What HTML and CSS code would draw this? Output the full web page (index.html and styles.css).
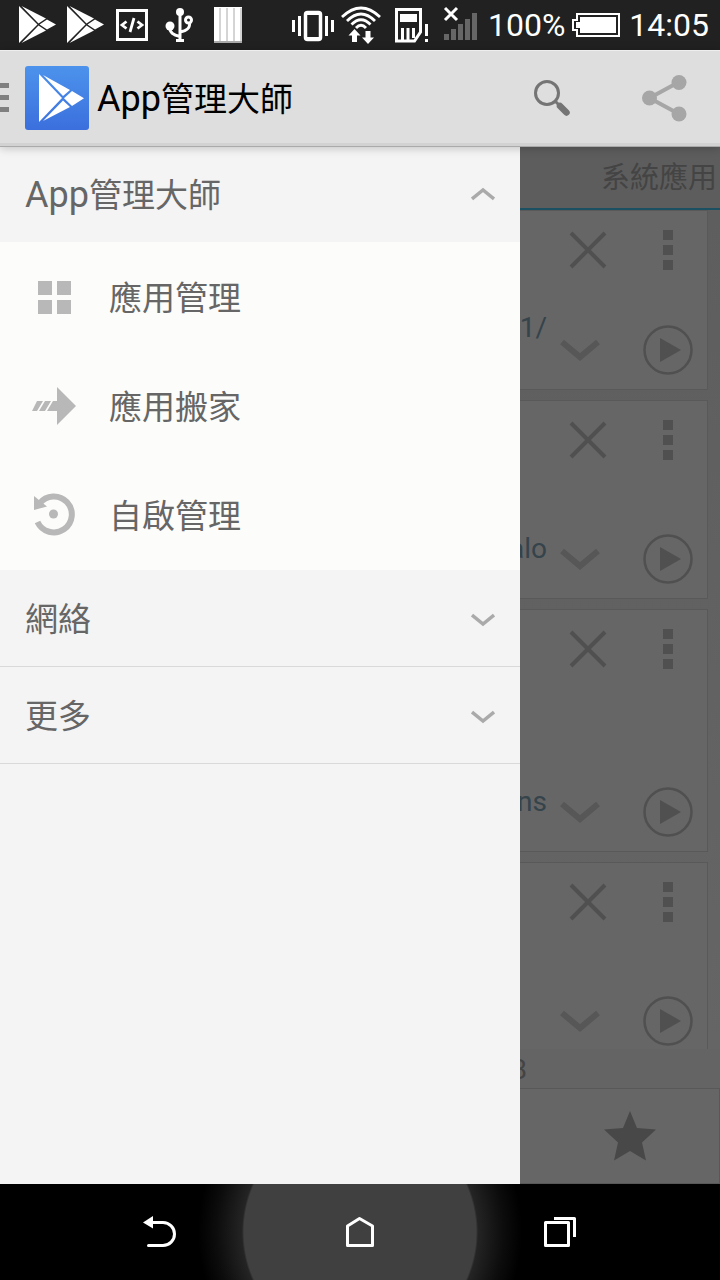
FILE: index.html
```html
<!DOCTYPE html>
<html lang="zh-Hant">
<head>
<meta charset="utf-8">
<meta name="viewport" content="width=device-width, initial-scale=1">
<title>App管理大師</title>
<link rel="stylesheet" href="styles.css">
</head>
<body>
<svg class="sprite" aria-hidden="true">
  <symbol id="play-store" viewBox="0 0 48 48">
    <path d="M7 5 25.500 23.500 7 42z"/><path d="M9.500 5 34 17.500 26.500 22.500z"/><path d="M9.500 42 34 29.500 26.500 24.500z"/><path d="M27.500 23.500 35 18.500 44 23.500 35 28.500z"/>
  </symbol>
  <symbol id="close" viewBox="0 0 40 40"><path d="M3 3 37 37M37 3 3 37" fill="none" stroke="currentColor" stroke-width="4"/></symbol>
  <symbol id="dots" viewBox="0 0 10 40"><path d="M0 0h10v10H0zM0 15h10v10H0zM0 30h10v10H0z" fill="currentColor"/></symbol>
  <symbol id="expand" viewBox="0 0 40 22"><path d="M2 3 20 18 38 3" fill="none" stroke="currentColor" stroke-width="6"/></symbol>
  <symbol id="launch" viewBox="0 0 50 50"><circle cx="25" cy="25" r="23.500" fill="none" stroke="currentColor" stroke-width="2.500"/><path d="M17 13 38 25 17 37z" fill="currentColor"/></symbol>
  <symbol id="chevron" viewBox="0 0 24 14"><path d="M1 2 12 11 23 2" fill="none" stroke="currentColor" stroke-width="3.500"/></symbol>
</svg>

<div class="screen">
  <header class="status">
    <div class="status-icons">
      <svg viewBox="0 0 48 48" fill="#fff"><use href="#play-store" width="48" height="48"/></svg>
      <svg viewBox="0 0 48 48" fill="#fff"><use href="#play-store" width="48" height="48"/></svg>
      <svg viewBox="0 0 48 48" fill="none" stroke="#fff"><path d="M9.500 9.500h29v29h-29z" stroke-width="3"/><path d="M18.500 20.500 14 24 18.500 27.500M29.500 20.500 34 24 29.500 27.500M26 17 22 31" stroke-width="2.800"/></svg>
      <svg viewBox="0 0 48 48" fill="none" stroke="#fff" stroke-width="3"><path d="M24 10v30M20 39.500h8M13.500 25c0 7 4 9 10.500 10.500M24 31c6-1 10.500-3 9.500-10"/><circle cx="24" cy="11" r="4" fill="#fff" stroke="none"/><circle cx="14" cy="25" r="4.500" fill="#fff" stroke="none"/><circle cx="32.500" cy="19" r="3"/></svg>
      <svg viewBox="0 0 48 48"><path d="M10 6h28v36H10z" fill="#fff"/><path d="M16 7v33M23 7v33M30 7v33M37 7v33" stroke="#aaa"/><path d="M10 41h28" stroke="#aaa" stroke-width="2"/></svg>
    </div>
    <div class="status-info">
      <div class="status-icons">
        <svg viewBox="0 0 48 48" fill="none" stroke="#fff" stroke-width="3"><rect x="16.500" y="11.500" width="15" height="27" rx="2" stroke-width="3.500"/><path d="M17 12h14M17 38h14" stroke-width="4"/><path d="M10.500 15v20M37.500 15v20M4.500 19v12M43.500 19v12"/></svg>
        <svg viewBox="0 0 48 48" fill="none" stroke="#fff" stroke-width="2.800"><path d="M5 16Q24-2 43 16M10 20Q24 6 38 20M14.500 23.500Q24 14 33.500 23.500M19 27Q24 21.500 29 27"/><path d="M17.500 28 23.500 34.500H20V41H15V34.500H11.500zM31 43 25 36.500H28.500V30H33.500V36.500H37z" fill="#fff" stroke="none"/></svg>
        <svg viewBox="0 0 48 48" fill="none" stroke="#fff" stroke-width="3"><path d="M11.500 8.500h24V31l-6 9h-18z"/><path d="M15 13h17v8H15z" fill="#fff" stroke="none"/><path d="M17.500 27v12M23 27v12M28.500 27v10"/><path d="M41.500 23v12M41.500 38v3"/></svg>
        <svg viewBox="0 0 48 48"><path d="M11 33h5v6h-5zM18 28h5v11h-5zM25 23h5v16h-5zM32 18h5v21h-5zM39 12h5v27h-5z" fill="#666"/><path d="M12 7 24 19M24 7 12 19" stroke="#fff" stroke-width="3"/></svg>
      </div>
      <span>100%</span>
      <svg class="battery" viewBox="0 0 50 24"><path d="M5 1H47V23H5V17H1V7H5z" fill="none" stroke="#fff" stroke-width="2"/><path d="M8 4H44V20H8V15H4V9H8z" fill="#fff"/></svg>
      <span>14:05</span>
    </div>
  </header>

  <div class="appbar">
    <button class="home" aria-label="選單">
      <svg class="burger" viewBox="0 0 10 30"><path d="M0 0h9v5H0zM0 12h9v5H0zM0 24h9v5H0z" fill="#808080"/></svg>
      <svg class="logo" viewBox="0 0 64 64"><defs><linearGradient id="sky" x2="0" y2="1"><stop offset="0" stop-color="#4c93ec"/><stop offset="1" stop-color="#3b6fdd"/></linearGradient></defs><rect width="64" height="64" rx="3" fill="url(#sky)"/><g fill="#fff"><path d="M14 8 37 32 14 56z"/><path d="M18 9 45 24 38 30z"/><path d="M18 55 45 41 38 34.500z"/><path d="M39 32.300 47 25 59 32.300 47 40z"/></g></svg>
    </button>
    <h1 class="title"><span class="latin">App</span>管理大師</h1>
    <button class="action" aria-label="搜尋"><svg width="40" height="40" viewBox="0 0 40 40"><circle cx="15" cy="15" r="11.500" fill="none" stroke="#747474" stroke-width="3"/><path d="m23 23 5 5" stroke="#747474" stroke-width="3"/><path d="m28 28 6.500 6.500" stroke="#747474" stroke-width="6.500" stroke-linecap="round"/></svg></button>
    <button class="action" aria-label="分享"><svg width="46" height="48" viewBox="0 0 46 48"><path d="M38 8 8.500 24 38 40" fill="none" stroke="#a6a6a6" stroke-width="4"/><g fill="#a6a6a6"><circle cx="38" cy="8.500" r="7.500"/><circle cx="8.500" cy="24" r="7.500"/><circle cx="38" cy="40" r="7.500"/></g></svg></button>
  </div>

  <div class="main">
    <nav class="drawer">
      <button class="group open"><span><span class="latin">App</span>管理大師</span><svg class="chevron up"><use href="#chevron"/></svg></button>
      <ul class="items">
        <li><button class="item"><svg viewBox="0 0 48 48"><path d="M8 8h14v14H8zM27 8h14v14H27zM8 27h14v14H8zM27 27h14v14H27z"/></svg><span>應用管理</span></button></li>
        <li><button class="item"><svg viewBox="0 0 48 48"><path d="M27 5 46 24 27 43V29H17L23 19H27zM7 19h6L7 29H2zM15 19h6l-6 10H9z"/></svg><span>應用搬家</span></button></li>
        <li><button class="item"><svg viewBox="0 0 48 48"><path d="M9.500 12.500A18 18 0 1 1 7.500 31" fill="none" stroke="#b8b8b8" stroke-width="6"/><path d="M4 5 17 15.500 4 19z"/><circle cx="23.500" cy="23" r="4.500"/></svg><span>自啟管理</span></button></li>
      </ul>
      <button class="group">網絡<svg class="chevron"><use href="#chevron"/></svg></button>
      <button class="group">更多<svg class="chevron"><use href="#chevron"/></svg></button>
    </nav>

    <section class="content">
      <div class="tabs"><button class="tab">系統應用</button></div>
      <div class="list">
        <article class="card card-short">
          <div class="card-top"><button class="tool" aria-label="移除"><svg width="40" height="40"><use href="#close"/></svg></button><button class="tool" aria-label="更多選項"><svg width="10" height="40"><use href="#dots"/></svg></button></div>
          <div class="card-bottom"><div class="path raised"><span>1/</span></div><button class="more" aria-label="展開"><svg width="40" height="22"><use href="#expand"/></svg></button><button class="tool" aria-label="開啟"><svg width="50" height="50"><use href="#launch"/></svg></button></div>
        </article>
        <article class="card">
          <div class="card-top"><button class="tool" aria-label="移除"><svg width="40" height="40"><use href="#close"/></svg></button><button class="tool" aria-label="更多選項"><svg width="10" height="40"><use href="#dots"/></svg></button></div>
          <div class="card-bottom"><div class="path"><span>alo</span></div><button class="more" aria-label="展開"><svg width="40" height="22"><use href="#expand"/></svg></button><button class="tool" aria-label="開啟"><svg width="50" height="50"><use href="#launch"/></svg></button></div>
        </article>
        <article class="card card-tall">
          <div class="card-top"><button class="tool" aria-label="移除"><svg width="40" height="40"><use href="#close"/></svg></button><button class="tool" aria-label="更多選項"><svg width="10" height="40"><use href="#dots"/></svg></button></div>
          <div class="card-bottom"><div class="path"><span>ns</span></div><button class="more" aria-label="展開"><svg width="40" height="22"><use href="#expand"/></svg></button><button class="tool" aria-label="開啟"><svg width="50" height="50"><use href="#launch"/></svg></button></div>
        </article>
        <article class="card">
          <div class="card-top"><button class="tool" aria-label="移除"><svg width="40" height="40"><use href="#close"/></svg></button><button class="tool" aria-label="更多選項"><svg width="10" height="40"><use href="#dots"/></svg></button></div>
          <div class="card-bottom"><div class="path"></div><button class="more" aria-label="展開"><svg width="40" height="22"><use href="#expand"/></svg></button><button class="tool" aria-label="開啟"><svg width="50" height="50"><use href="#launch"/></svg></button></div>
        </article>
      </div>
      <div class="summary"><div class="count"><span>8</span></div></div>
      <button class="favorite" aria-label="收藏"><svg width="52" height="50" viewBox="0 0 52 50"><path d="M26 0 33 17 52 18.500 38 31.500 42 49.500 26 40 10 49.500 14 31.500 0 18.500 19 17z" fill="#484848"/></svg></button>
    </section>
  </div>

  <footer class="navbar">
    <button aria-label="返回"><svg width="40" height="40" viewBox="0 0 40 40"><path d="M3 10.500 13 4V16.500z" fill="#fff"/><path d="M12 10.500H23a11.500 11.500 0 0 1 0 23H8.500" fill="none" stroke="#fff" stroke-width="3" stroke-linecap="round"/></svg></button>
    <button aria-label="主畫面"><svg width="40" height="40" viewBox="0 0 40 40"><path d="M7.500 14 19.500 6.500 32.500 14V33.500H7.500z" fill="none" stroke="#fff" stroke-width="3" stroke-linejoin="round"/></svg></button>
    <button aria-label="最近使用"><svg width="40" height="40" viewBox="0 0 40 40" fill="none" stroke="#fff" stroke-width="3" stroke-linejoin="round"><path d="M5.500 10.500h23v23h-23z"/><path d="M14 6.500H34.500V25"/></svg></button>
  </footer>
</div>
</body>
</html>
```
FILE: styles.css
```css
* { box-sizing: border-box; }

body {
  margin: 0;
  background: #000;
  font-family: Roboto, "Noto Sans CJK TC", sans-serif;
}

button {
  margin: 0;
  padding: 0;
  border: 0;
  background: none;
  color: inherit;
  font: inherit;
  display: flex;
  align-items: center;
  justify-content: center;
}

svg { flex: none; display: block; }

.sprite { position: absolute; width: 0; height: 0; }

.screen {
  height: 100vh;
  display: flex;
  flex-direction: column;
  overflow: hidden;
}

/* Status bar */
.status {
  flex: none;
  height: 50px;
  padding: 0 11px 0 12px;
  display: flex;
  align-items: center;
  justify-content: space-between;
  background: #212121;
  color: #fff;
  font-size: 32px;
  line-height: 52px;
}

.status-icons { display: flex; }
.status-icons svg { width: 48px; height: 48px; }
.status-info { display: flex; align-items: center; gap: 7px; }
.battery { width: 50px; height: 24px; }

/* App bar */
.appbar {
  position: relative;
  z-index: 1;
  flex: none;
  height: 97px;
  padding-bottom: 2px;
  display: flex;
  align-items: stretch;
  background: #dedede;
  border-top: 1px solid #eee;
  border-bottom: 1px solid #aaa;
  box-shadow: inset 0 -3px #d2d2d2, 0 1px 9px rgba(0, 0, 0, 0.22);
}

.home { gap: 15px; }
.burger { width: 10px; height: 30px; }
.logo { width: 64px; height: 64px; }

.title {
  flex: 1;
  margin: 0;
  padding-left: 8px;
  color: #000;
  font-size: 33px;
  font-weight: 400;
  line-height: 96px;
  white-space: nowrap;
}

.latin { font-size: 36px; }
.action { width: 112px; }

/* Drawer beside the dimmed page */
.main {
  flex: 1;
  min-height: 0;
  display: grid;
  grid-template-columns: 13fr 5fr;
  grid-template-rows: 100%;
}

.drawer {
  background: #f4f4f4;
  color: #666;
  font-size: 33px;
  line-height: 48px;
}

.group {
  width: 100%;
  height: 97px;
  padding: 4px 25px 0;
  justify-content: space-between;
  border-bottom: 1px solid #d9d9d9;
}

.group.open { height: 95px; padding-top: 2px; border-bottom: 0; }
.chevron { width: 24px; height: 14px; color: #aaa; }
.chevron.up { margin-bottom: 4px; transform: rotate(180deg); }

.items {
  margin: 0;
  padding: 0 0 1px;
  list-style: none;
  background: #fcfcfa;
}

.item {
  width: 100%;
  height: 109px;
  padding: 0 30px;
  gap: 31px;
  justify-content: flex-start;
}

.item svg { width: 48px; height: 48px; fill: #b8b8b8; }
.item span { padding-top: 4px; }

/* Dimmed page */
.content {
  min-width: 0;
  display: flex;
  flex-direction: column;
  background: #666;
  color: #505050;
}

.tabs {
  flex: none;
  height: 63px;
  display: flex;
  justify-content: flex-end;
  background: #5d5d5d;
  border-bottom: 2px solid #1b4f62;
}

.tab { color: #444; font-size: 29px; line-height: 58px; padding-right: 3px; }

.list {
  flex: 1;
  min-height: 0;
  padding-right: 12px;
  display: flex;
  flex-direction: column;
  gap: 10px;
  overflow: hidden;
  background: linear-gradient(#5e5e5e, #656565);
}

.card {
  flex: none;
  height: 199px;
  display: flex;
  flex-direction: column;
  justify-content: space-between;
  background: #666;
  box-shadow: inset -1px 0 #595959, inset 0 1px #595959, inset 0 -1px #595959;
}

.card-short { height: 180px; }
.card-tall { height: 243px; }
.card-top { height: 80px; display: flex; justify-content: flex-end; }
.card-bottom { height: 80px; display: flex; }
.tool { flex: none; width: 80px; }
.more { flex: none; width: 64px; margin-right: 16px; color: #575757; }

.path {
  flex: 1;
  min-width: 0;
  display: flex;
  justify-content: flex-end;
  align-items: flex-end;
  padding: 0 1px 34px 0;
  overflow: hidden;
  color: #35434b;
  font-size: 28px;
  line-height: 32px;
}

.path.raised { padding-bottom: 46px; }

.summary {
  flex: none;
  height: 39px;
  background: #646464;
  color: #444;
  font-size: 28px;
  line-height: 42px;
}

.count {
  width: 7px;
  display: flex;
  justify-content: flex-end;
  overflow: hidden;
}

.favorite {
  flex: none;
  height: 96px;
  padding-left: 20px;
  border: 1px solid #585858;
  border-left: 0;
}

/* System navigation with the pressed-home glow */
.navbar {
  flex: none;
  height: 96px;
  padding: 0 60px;
  display: grid;
  grid-template-columns: repeat(3, 1fr);
  background: #000 radial-gradient(circle at 50% 50%, #404040 116px, #242424 118px, #0c0c0c 144px, #000 162px);
}
```
